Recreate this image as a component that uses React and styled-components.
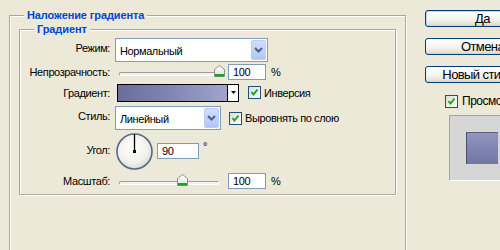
import React from 'react';
import styled, { createGlobalStyle } from 'styled-components';

const GlobalStyle = createGlobalStyle`
  html, body {
    margin: 0;
    padding: 0;
    background: #ECE9D8;
    overflow: hidden;
  }
  body {
    font-family: "Liberation Sans", Arial, sans-serif;
    font-size: 11px;
    color: #000;
  }
`;

const Page = styled.div`
  display: flex;
  align-items: flex-start;
  width: 500px;
  height: 250px;
  overflow: hidden;
`;

const LeftCol = styled.div`
  flex: none;
  padding: 15px 0 0 9px;
  letter-spacing: -0.4px;
`;

const Group = styled.div`
  position: relative;
  box-sizing: border-box;
  width: ${p => p.$w}px;
  height: ${p => (p.$h ? `${p.$h}px` : 'auto')};
  padding: ${p => p.$pad};
  border: 1px solid #ACA899;
  box-shadow: inset 1px 1px 0 #fff, 1px 1px 0 #fff;
`;

const GroupTitle = styled.div`
  position: absolute;
  top: -7px;
  left: 14px;
  padding: 0 3px;
  line-height: 13px;
  background: #ECE9D8;
  color: #0046D5;
  font-weight: bold;
  font-size: 11px;
  letter-spacing: -0.1px;
`;

const Row = styled.div`
  display: flex;
  align-items: center;
  height: ${p => p.$h}px;
`;

const Label = styled.div`
  flex: none;
  width: 90px;
  text-align: right;
  white-space: nowrap;
  margin-bottom: ${p => (p.$lift || 0) * 2}px;
`;

const Select = styled.div`
  flex: none;
  box-sizing: border-box;
  display: flex;
  align-items: center;
  justify-content: space-between;
  width: ${p => p.$w}px;
  height: 24px;
  margin-left: 5px;
  padding: 1px 1px 1px 4px;
  background: #fff;
  border: 1px solid #7F9DB9;
`;

const SelectText = styled.span`
  margin-top: 2px;
`;

const DropButton = styled.div`
  box-sizing: border-box;
  display: flex;
  align-items: center;
  justify-content: center;
  width: 15px;
  height: 100%;
  border: 1px solid #B9CDF6;
  border-radius: 2px;
  background: linear-gradient(180deg, #D2DEFC 0%, #BFD1FA 55%, #B1C6F6 100%);
`;

const Slider = styled.div`
  position: relative;
  flex: none;
  box-sizing: border-box;
  width: 106px;
  height: 16px;
  margin-left: 9px;
  padding-top: 8px;
`;

const Track = styled.div`
  width: 98px;
  height: 2px;
  border: 1px solid;
  border-color: #9D9C99 #fff #fff #9D9C99;
  border-radius: 2px;
  background: #F2F1EA;
`;

const Thumb = styled.svg`
  position: absolute;
  top: 1px;
  left: ${p => p.$pos * 100 - 5.5}px;
`;

const Field = styled.div`
  flex: none;
  box-sizing: border-box;
  width: ${p => p.$w}px;
  height: 16px;
  margin-left: ${p => p.$ml}px;
  padding-left: 4px;
  line-height: 14px;
  background: #fff;
  border: 1px solid #7F9DB9;
`;

const Unit = styled.span`
  margin-left: 5px;
`;

const Degree = styled.span`
  align-self: flex-start;
  margin-top: 9px;
  margin-left: 4px;
  line-height: 11px;
`;

const GradientBox = styled.div`
  flex: none;
  box-sizing: border-box;
  display: flex;
  width: 122px;
  height: 18px;
  margin-left: 7px;
  border: 1px solid #000;
`;

const GradientFill = styled.div`
  flex: 1;
  background: linear-gradient(90deg, #6A6E99 0%, #8286B2 50%, #A1A5CB 100%);
`;

const GradientArrow = styled.div`
  display: flex;
  align-items: center;
  justify-content: center;
  width: 10px;
  border-left: 1px solid #000;
  background: #fff;
`;

const Check = styled.label`
  display: flex;
  align-items: center;
  gap: ${p => p.$gap || 3}px;
  margin-left: ${p => p.$ml}px;
  font-size: ${p => p.$fs || 11}px;
  letter-spacing: ${p => (p.$fs ? '-0.5px' : 'inherit')};
  white-space: nowrap;
`;

const CheckBox = styled.span`
  box-sizing: border-box;
  display: flex;
  align-items: center;
  justify-content: center;
  width: 13px;
  height: 13px;
  border: 1px solid #1C5180;
  background: linear-gradient(135deg, #DCDCD7 0%, #F4F4F0 70%, #fff 100%);
`;

const Dial = styled.svg`
  flex: none;
  margin-left: 6px;
`;

const RightCol = styled.div`
  flex: none;
  display: flex;
  flex-direction: column;
  width: 120px;
  margin-left: 19px;
  padding-top: 10px;
`;

const Button = styled.div`
  box-sizing: border-box;
  width: 115px;
  height: 17px;
  margin-bottom: 11px;
  border: 1px solid #003C74;
  border-radius: 3px;
  background: linear-gradient(180deg, #FFFFFF 0%, #F5F4EF 55%, #E6E3D9 85%, #D6D0C5 100%);
  box-shadow: ${p => (p.$primary ? 'inset 0 0 0 1px #C6D8F7' : 'none')};
  font-size: 13px;
  letter-spacing: -0.6px;
  line-height: 15px;
  text-align: center;
  white-space: nowrap;
`;

const PreviewFrame = styled.div`
  box-sizing: border-box;
  display: flex;
  align-items: center;
  justify-content: center;
  width: 66px;
  height: 66px;
  margin: 7px 0 0 24px;
  background: #D6D6D6;
  border: 1px solid;
  border-color: #A5A5A0 #fff #fff #A5A5A0;
`;

const Swatch = styled.div`
  box-sizing: border-box;
  width: 32px;
  height: 32px;
  border-left: 1px solid #4A4E70;
  border-top: 1px solid #5A5E82;
  background: linear-gradient(180deg, #9296BE 0%, #8084B0 50%, #7276A3 100%);
`;

const Chevron = () => (
  <svg width="9" height="6" viewBox="0 0 9 6">
    <polyline points="1,1 4.5,4.5 8,1" fill="none" stroke="#4D6185" strokeWidth="2" />
  </svg>
);

const CheckMark = () => (
  <svg width="9" height="9" viewBox="0 0 9 9">
    <polyline points="1.5,4 3.5,6.5 7.5,1.5" fill="none" stroke="#21A121" strokeWidth="2" />
  </svg>
);

const SliderThumb = ({ pos }) => (
  <Thumb $pos={pos} width="11" height="12" viewBox="0 0 11 12">
    <defs>
      <linearGradient id="thumbFill" x1="0" y1="0" x2="0" y2="1">
        <stop offset="0" stopColor="#FFFFFF" />
        <stop offset="1" stopColor="#E2E1DA" />
      </linearGradient>
    </defs>
    <path d="M0.5 4.5 L5.5 0.5 L10.5 4.5 L10.5 11.5 L0.5 11.5 Z" fill="url(#thumbFill)" stroke="#8E8F8F" />
    <rect x="1" y="9" width="9" height="2.5" fill="#21A121" />
  </Thumb>
);

const SliderRow = ({ label, value, pos, h }) => (
  <Row $h={h}>
    <Label>{label}</Label>
    <Slider>
      <Track />
      <SliderThumb pos={pos} />
    </Slider>
    <Field $w={38} $ml={3}>{value}</Field>
    <Unit>%</Unit>
  </Row>
);

const CheckOption = ({ children, ml, fs }) => (
  <Check $ml={ml} $fs={fs} $gap={fs ? 4 : 3}>
    <CheckBox>
      <CheckMark />
    </CheckBox>
    {children}
  </Check>
);

export default function App() {
  return (
    <Page>
      <GlobalStyle />
      <LeftCol>
        <Group $w={397} $h={260} $pad="13px 9px 0 9px">
          <GroupTitle>Наложение градиента</GroupTitle>
          <Group $w={377} $pad="8px 0 2px 0">
            <GroupTitle>Градиент</GroupTitle>

            <Row $h={24}>
              <Label $lift={2}>Режим:</Label>
              <Select $w={153}>
                <SelectText>Нормальный</SelectText>
                <DropButton><Chevron /></DropButton>
              </Select>
            </Row>

            <SliderRow label="Непрозрачность:" value="100" pos={1} h={19} />

            <Row $h={23}>
              <Label>Градиент:</Label>
              <GradientBox>
                <GradientFill />
                <GradientArrow>
                  <svg width="5" height="3" viewBox="0 0 5 3">
                    <polygon points="0,0 5,0 2.5,3" fill="#000" />
                  </svg>
                </GradientArrow>
              </GradientBox>
              <CheckOption ml={9}>Инверсия</CheckOption>
            </Row>

            <Row $h={28}>
              <Label $lift={2}>Стиль:</Label>
              <Select $w={106}>
                <SelectText>Линейный</SelectText>
                <DropButton><Chevron /></DropButton>
              </Select>
              <CheckOption ml={8}>Выровнять по слою</CheckOption>
            </Row>

            <Row $h={38}>
              <Label $lift={1}>Угол:</Label>
              <Dial width="37" height="37" viewBox="0 0 37 37">
                <defs>
                  <radialGradient id="dialFill" cx="0.45" cy="0.4" r="0.6">
                    <stop offset="0" stopColor="#FFFFFF" />
                    <stop offset="0.7" stopColor="#F1F1EE" />
                    <stop offset="1" stopColor="#DCDCD8" />
                  </radialGradient>
                </defs>
                <circle cx="18.5" cy="18.5" r="17.5" fill="url(#dialFill)" stroke="#5A6689" strokeWidth="1.6" />
                <line x1="18.5" y1="18.5" x2="18.5" y2="1" stroke="#000" strokeWidth="1.3" />
                <rect x="17" y="17" width="3" height="3" fill="#000" />
              </Dial>
              <Field $w={42} $ml={4}>90</Field>
              <Degree>°</Degree>
            </Row>

            <SliderRow label="Масштаб:" value="100" pos={0.63} h={22} />
          </Group>
        </Group>
      </LeftCol>

      <RightCol>
        <Button $primary>Да</Button>
        <Button>Отмена</Button>
        <Button>Новый стиль...</Button>
        <CheckOption ml={20} fs={12}>Просмотр</CheckOption>
        <PreviewFrame>
          <Swatch />
        </PreviewFrame>
      </RightCol>
    </Page>
  );
}
